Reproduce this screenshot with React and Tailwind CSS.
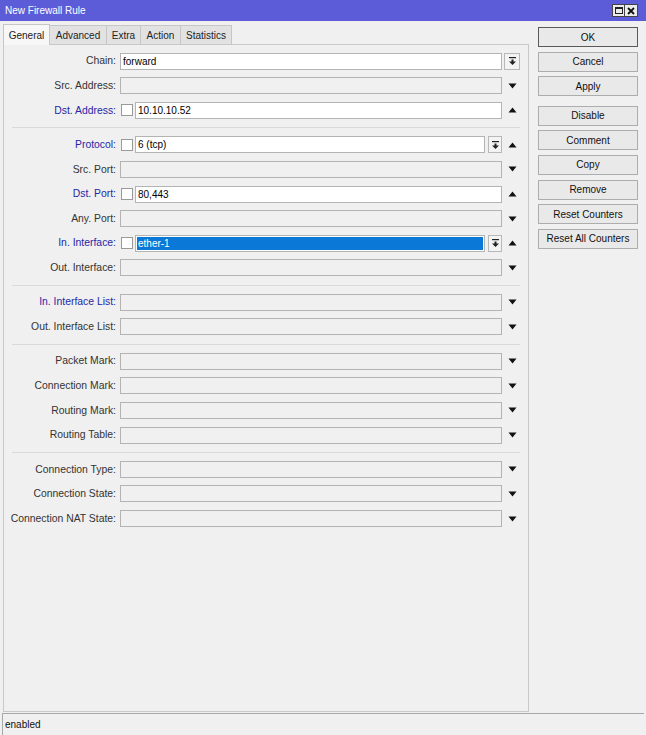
import React from "react";

const font = { fontFamily: '"Liberation Sans", Arial, sans-serif' };

const Up = () => (
  <svg width="9" height="6" viewBox="0 0 9 6">
    <path d="M0.5 5.5 L4.5 0.5 L8.5 5.5 Z" fill="#111" />
  </svg>
);

const Down = () => (
  <svg width="9" height="6" viewBox="0 0 9 6">
    <path d="M0.5 0.5 L8.5 0.5 L4.5 5.5 Z" fill="#111" />
  </svg>
);

// little combo button: bar over a down arrow
const DropBtn = ({ w = "w-[15px]" }) => (
  <div className={`${w} h-[17px] border border-[#b8b8b8] bg-[#f3f3f3] flex items-center justify-center`}>
    <svg width="9" height="10" viewBox="0 0 9 10">
      <rect x="1" y="1" width="7" height="1.2" fill="#222" />
      <rect x="3.5" y="3.5" width="2" height="2.5" fill="#222" />
      <path d="M1 5.5 L8 5.5 L4.5 9 Z" fill="#222" />
    </svg>
  </div>
);

const Row = ({ label, blue, value, check, arrow, inlineDrop, slotDrop, selected }) => {
  const active = value !== undefined;
  return (
    <div className="h-[24.6px] flex items-center">
      <div
        className={`w-[112px] text-right text-[10.4px] whitespace-nowrap ${
          blue ? "text-[#2626a6]" : "text-[#333]"
        }`}
      >
        {label}
      </div>
      <div className="ml-[4px] w-[382px] flex items-center">
        {check && (
          <div className="w-[12px] h-[12px] ml-[1px] mr-[2px] border border-[#9a9a9a] bg-white shrink-0" />
        )}
        <div
          className={`flex-1 h-[17px] border flex items-center ${
            active ? "border-[#b4b4b4] bg-white" : "border-[#b4b4b4] bg-[#f0f0f0]"
          } ${selected ? "p-[1px]" : ""}`}
        >
          {selected ? (
            <div className="w-full h-full bg-[#0a78d6] text-white text-[10px] flex items-center pl-[1px]">
              {value}
            </div>
          ) : (
            <span className="pl-[2px] text-[10px] text-black">{value}</span>
          )}
        </div>
        {inlineDrop && (
          <div className="ml-[3px]">
            <DropBtn w="w-[14px]" />
          </div>
        )}
      </div>
      <div className="w-[18px] ml-[1px] flex items-center justify-center">
        {slotDrop ? <DropBtn w="w-[16px]" /> : arrow === "up" ? <Up /> : arrow === "down" ? <Down /> : null}
      </div>
    </div>
  );
};

const Sep = () => (
  <div className="h-[9.8px] flex items-center pl-[8px] pr-[8px]">
    <div className="w-full border-t border-[#dadada]" />
  </div>
);

const Btn = ({ children, def }) => (
  <div
    className={`h-[20px] w-[100px] flex items-center justify-center text-[10px] text-[#111] bg-[#e9e9e9] border ${
      def ? "border-[#5a5a5a]" : "border-[#adadad]"
    }`}
  >
    {children}
  </div>
);

const tabs = [
  { name: "General", w: "w-[47px]" },
  { name: "Advanced", w: "w-[57px]" },
  { name: "Extra", w: "w-[34px]" },
  { name: "Action", w: "w-[40px]" },
  { name: "Statistics", w: "w-[51px]" },
];

export default function App() {
  return (
    <div className="w-[646px] h-[735px] bg-[#f0f0f0] flex flex-col overflow-hidden" style={font}>
      {/* title bar */}
      <div className="h-[21px] bg-[#5c5cd8] flex items-center justify-between pl-[5px] pr-[8px]">
        <span className="text-white text-[10px]">New Firewall Rule</span>
        <div className="flex">
          <div className="w-[13px] h-[13px] bg-[#ececec] border border-[#444] flex items-center justify-center">
            <div className="w-[8px] h-[7px] border border-[#222] border-t-2" />
          </div>
          <div className="w-[13px] h-[13px] bg-[#ececec] border border-[#444] border-l-0 flex items-center justify-center">
            <svg width="8" height="8" viewBox="0 0 8 8">
              <path d="M1 1 L7 7 M7 1 L1 7" stroke="#111" strokeWidth="1.8" />
            </svg>
          </div>
        </div>
      </div>

      {/* body */}
      <div className="flex-1 flex">
        <div className="ml-[3px] w-[526px] flex flex-col pt-[3px] pb-[1px]">
          <div className="h-[20px] flex items-end">
            {tabs.map((t, i) => (
              <div
                key={t.name}
                className={`${t.w} flex items-center justify-center text-[10px] text-[#222] border border-[#c6c6c6] ${
                  i === 0
                    ? "h-[21px] -mb-[1px] bg-[#f7f7f7] border-b-0 z-10"
                    : "h-[19px] bg-[#e2e2e2] border-l-0 border-b-0"
                }`}
              >
                {t.name}
              </div>
            ))}
          </div>
          <div className="flex-1 border border-[#c8c8c8] bg-[#f0f0f0] pt-[4px]">
            <Row label="Chain:" value="forward" slotDrop />
            <Row label="Src. Address:" arrow="down" />
            <Row label="Dst. Address:" blue check value="10.10.10.52" arrow="up" />
            <Sep />
            <Row label="Protocol:" blue check value="6 (tcp)" inlineDrop arrow="up" />
            <Row label="Src. Port:" arrow="down" />
            <Row label="Dst. Port:" blue check value="80,443" arrow="up" />
            <Row label="Any. Port:" arrow="down" />
            <Row label="In. Interface:" blue check value="ether-1" selected inlineDrop arrow="up" />
            <Row label="Out. Interface:" arrow="down" />
            <Sep />
            <Row label="In. Interface List:" blue arrow="down" />
            <Row label="Out. Interface List:" arrow="down" />
            <Sep />
            <Row label="Packet Mark:" arrow="down" />
            <Row label="Connection Mark:" arrow="down" />
            <Row label="Routing Mark:" arrow="down" />
            <Row label="Routing Table:" arrow="down" />
            <Sep />
            <Row label="Connection Type:" arrow="down" />
            <Row label="Connection State:" arrow="down" />
            <Row label="Connection NAT State:" arrow="down" />
          </div>
        </div>

        <div className="ml-[9px] pt-[6px] flex flex-col">
          <div className="flex flex-col gap-[4.6px]">
            <Btn def>OK</Btn>
            <Btn>Cancel</Btn>
            <Btn>Apply</Btn>
          </div>
          <div className="mt-[9.6px] flex flex-col gap-[4.6px]">
            <Btn>Disable</Btn>
            <Btn>Comment</Btn>
            <Btn>Copy</Btn>
            <Btn>Remove</Btn>
            <Btn>Reset Counters</Btn>
            <Btn>Reset All Counters</Btn>
          </div>
        </div>
      </div>

      {/* status bar */}
      <div className="h-[22px] ml-[2px] mr-[2px] border-t border-l border-[#a8a8a8] flex items-center pl-[2px]">
        <span className="text-[10px] text-[#111]">enabled</span>
      </div>
    </div>
  );
}
